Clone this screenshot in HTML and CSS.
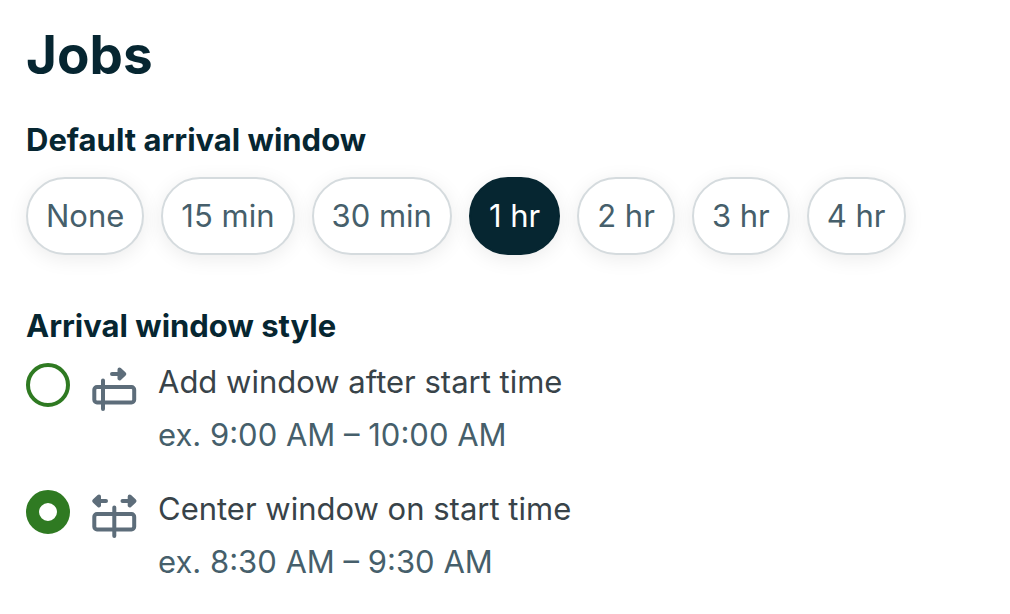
FILE: index.html
```html
<!DOCTYPE html>
<html lang="en">
<head>
<meta charset="utf-8">
<meta name="viewport" content="width=device-width, initial-scale=1">
<title>Jobs</title>
<link rel="stylesheet" href="styles.css">
</head>
<body>
<main class="settings">
  <h1 class="title">Jobs</h1>
  <section class="group">
    <h2 class="heading">Default arrival window</h2>
    <div class="chips">
      <button type="button" class="chip">None</button>
      <button type="button" class="chip">15 min</button>
      <button type="button" class="chip">30 min</button>
      <button type="button" class="chip chip-selected" aria-pressed="true">1 hr</button>
      <button type="button" class="chip">2 hr</button>
      <button type="button" class="chip">3 hr</button>
      <button type="button" class="chip">4 hr</button>
    </div>
  </section>
  <section class="group">
    <h2 class="heading" id="style-heading">Arrival window style</h2>
    <div class="options" role="radiogroup" aria-labelledby="style-heading">
      <label class="option" for="style-after">
        <input class="radio" type="radio" name="style" id="style-after">
        <svg class="icon" viewBox="0 0 48 48" aria-hidden="true">
          <path d="M22 11H33M13 17.5V46M7 24H41.500a2.700 2.700 0 0 1 2.700 2.700V36.800a2.700 2.700 0 0 1-2.700 2.700H7a2.700 2.700 0 0 1-2.700-2.700V26.700A2.700 2.700 0 0 1 7 24Z"/>
          <path class="head" d="M29.500 6.500L34.300 11L29.500 15.500Z"/>
        </svg>
        <span class="text"><span class="name">Add window after start time</span><span class="example">ex. 9:00 AM – 10:00 AM</span></span>
      </label>
      <label class="option" for="style-center">
        <input class="radio" type="radio" name="style" id="style-center" checked>
        <svg class="icon" viewBox="0 0 48 48" aria-hidden="true">
          <path d="M6 11H16M32.500 11H43M24.300 17.500V46M7 24H41.500a2.700 2.700 0 0 1 2.700 2.700V36.800a2.700 2.700 0 0 1-2.700 2.700H7a2.700 2.700 0 0 1-2.700-2.700V26.700A2.700 2.700 0 0 1 7 24Z"/>
          <path class="head" d="M9 6.500L4.200 11L9 15.500ZM39.700 6.500L44.500 11L39.700 15.500Z"/>
        </svg>
        <span class="text"><span class="name">Center window on start time</span><span class="example">ex. 8:30 AM – 9:30 AM</span></span>
      </label>
    </div>
  </section>
</main>
</body>
</html>
```
FILE: styles.css
```css
body {
  margin: 0;
  background: #fff;
  color: #062631;
  font-family: Inter, "Liberation Sans", sans-serif;
}
.settings {
  padding: 24px 26px 0;
}
.title {
  margin: 0 0 34px;
  font-size: 53px;
  line-height: 62px;
  font-weight: 700;
}
.group + .group {
  margin-top: 51px;
}
.heading {
  margin: 0 0 17px;
  font-size: 31px;
  line-height: 40px;
  font-weight: 700;
}
.chips {
  display: flex;
  flex-wrap: wrap;
  gap: 17px;
}
.chip {
  box-sizing: border-box;
  height: 78px;
  padding: 0 18px;
  border: 2px solid #d5dbde;
  border-radius: 39px;
  background: #fff;
  color: #465f6b;
  font-family: inherit;
  font-size: 31px;
  line-height: 40px;
  box-shadow: 0 4px 20px rgba(0, 0, 0, 0.08);
}
.chip-selected {
  border-color: #062631;
  background: #062631;
  color: #fff;
}
.options {
  display: flex;
  flex-direction: column;
  gap: 36px;
}
.option {
  display: flex;
  align-items: flex-start;
}
.radio {
  appearance: none;
  box-sizing: border-box;
  flex: none;
  width: 44px;
  height: 44px;
  margin: 0 20px 0 0;
  border: 4px solid #2f7a22;
  border-radius: 50%;
  background: #fff;
}
.radio:checked {
  border-width: 13px;
}
.icon {
  flex: none;
  width: 48px;
  height: 48px;
  margin-right: 20px;
  fill: none;
  stroke: #5d6d7a;
  stroke-width: 4;
  stroke-linecap: round;
  stroke-linejoin: round;
}
.head {
  fill: #5d6d7a;
}
.text {
  display: flex;
  flex-direction: column;
  gap: 15px;
  font-size: 31px;
  line-height: 38px;
}
.name {
  color: #384349;
}
.example {
  color: #465f6b;
}
```
